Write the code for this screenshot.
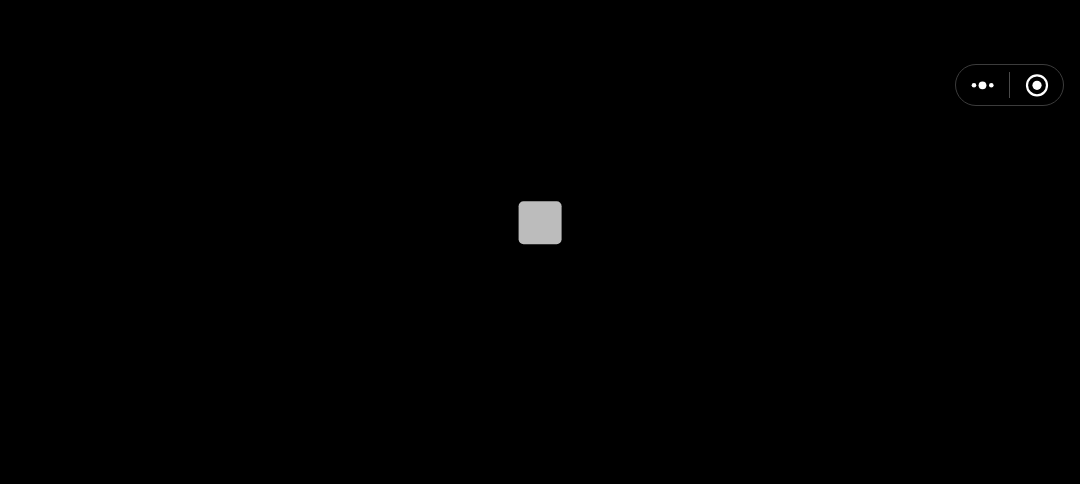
<script>
</script>

<div class="page">
  <div class="capsule">
    <button class="part more" aria-label="More">
      <svg width="26" height="10" viewBox="0 0 26 10"><circle cx="4" cy="5.3" r="2.3" /><circle cx="12.5" cy="5.3" r="3.9" /><circle cx="21.3" cy="5.3" r="2.3" /></svg>
    </button>
    <span class="divider"></span>
    <button class="part close" aria-label="Close">
      <svg width="24" height="24" viewBox="0 0 24 24"><circle cx="12" cy="12.3" r="10" fill="none" stroke="#fff" stroke-width="2.2" /><circle cx="12" cy="12.3" r="4.6" /></svg>
    </button>
  </div>
  <svg class="square" width="44" height="44" viewBox="0 0 44 44"><rect x="0.6" y="0.3" width="43" height="43" rx="5" /></svg>
</div>

<style>
  :global(body) {
    margin: 0;
    background: #000;
  }
  .page {
    height: 484px;
    box-sizing: border-box;
    background: #000;
    display: flex;
    flex-direction: column;
    padding-top: 64px;
    overflow: hidden;
  }
  .capsule {
    align-self: flex-end;
    margin-right: 16px;
    width: 109px;
    height: 42px;
    box-sizing: border-box;
    border: 1px solid #3c3c3c;
    border-radius: 21px;
    display: flex;
    align-items: center;
  }
  .part {
    background: none;
    border: 0;
    padding: 0;
    display: flex;
    align-items: center;
    justify-content: center;
    height: 100%;
  }
  .part svg {
    fill: #fff;
    display: block;
  }
  .more {
    width: 53px;
  }
  .divider {
    width: 1px;
    height: 26px;
    background: #4a4a4a;
  }
  .close {
    flex: 1;
  }
  .square {
    align-self: center;
    margin-top: 95px;
    display: block;
    fill: #bcbcbc;
  }
</style>
